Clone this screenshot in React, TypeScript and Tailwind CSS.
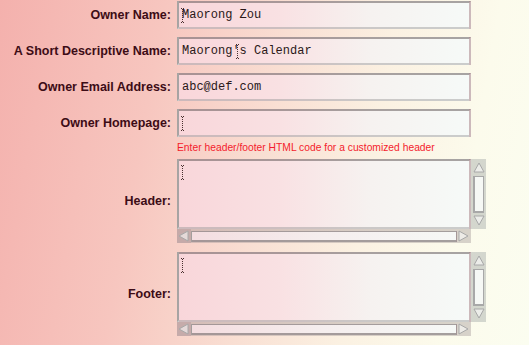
import React from "react";

const labelCls =
  "w-[171px] shrink-0 text-right font-bold text-[12.5px] leading-none text-[#3d0c16] [font-family:'Liberation_Sans',Arial,sans-serif]";

const boxCls =
  "relative w-[294px] border-2 border-t-[rgba(90,80,80,0.5)] border-l-[rgba(90,80,80,0.5)] border-b-[rgba(150,150,150,0.45)] border-r-[rgba(150,150,150,0.45)] bg-[linear-gradient(90deg,#f9d6da_0%,#f9e1e3_35%,#f6f2f0_66%,#f6faf8_100%)]";

function Caret({ left, top }: { left: number; top: number }) {
  return (
    <svg
      width="3"
      height="15"
      viewBox="0 0 3 15"
      className="absolute"
      style={{ left, top }}
    >
      <rect x="0" y="0" width="1" height="1" fill="#4a3030" />
      <rect x="2" y="0" width="1" height="1" fill="#4a3030" />
      {[1, 3, 5, 7, 9, 11, 13].map((y) => (
        <rect key={y} x="1" y={y} width="1" height="1" fill="#4a3030" />
      ))}
      <rect x="0" y="14" width="1" height="1" fill="#4a3030" />
      <rect x="2" y="14" width="1" height="1" fill="#4a3030" />
    </svg>
  );
}

function Field({ value, caret }: { value?: string; caret?: number }) {
  return (
    <div
      className={`${boxCls} h-[28px] flex items-center pl-[3px] text-[12px] text-[#2a1818] [font-family:'Liberation_Mono','Courier_New',monospace] whitespace-pre`}
    >
      {value}
      {caret !== undefined && <Caret left={caret} top={5} />}
    </div>
  );
}

function Arrow({ dir }: { dir: "up" | "down" | "left" | "right" }) {
  const pts: Record<string, string> = {
    up: "6,1 11,10 1,10",
    down: "1,1 11,1 6,10",
    left: "1,6 10,1 10,11",
    right: "1,1 10,6 1,11",
  };
  return (
    <svg width="12" height="12" viewBox="0 0 12 12">
      <polygon
        points={pts[dir]}
        fill="rgba(255,255,255,0.55)"
        stroke="#a8a8a8"
        strokeWidth="1"
      />
    </svg>
  );
}

function TextBlock() {
  return (
    <div className="flex flex-col">
      <div className="flex">
        <div className={`${boxCls} h-[70px]`}>
          <Caret left={2} top={4} />
        </div>
        <div className="w-[15px] h-[70px] flex flex-col items-center bg-[rgba(185,190,185,0.6)]">
          <div className="h-[17px] flex items-center justify-center">
            <Arrow dir="up" />
          </div>
          <div className="flex-1 w-[11px] bg-[#f6f8f5] border border-[#a8a8a8] border-b-2 border-l-2" />
          <div className="h-[16px] flex items-center justify-center">
            <Arrow dir="down" />
          </div>
        </div>
      </div>
      <div className="w-[294px] h-[14px] flex items-center bg-[rgba(170,160,160,0.45)]">
        <div className="w-[14px] h-[14px] flex items-center justify-center bg-[rgba(150,120,130,0.25)]">
          <Arrow dir="left" />
        </div>
        <div className="flex-1 h-[11px] border border-[rgba(130,120,120,0.7)] border-b-2 bg-[linear-gradient(90deg,#f4dde0_0%,#f5eeee_50%,#f6f8f6_100%)]" />
        <div className="w-[14px] h-[14px] flex items-center justify-center">
          <Arrow dir="right" />
        </div>
      </div>
    </div>
  );
}

export default function App() {
  return (
    <div className="w-[529px] h-[345px] overflow-hidden bg-[linear-gradient(100deg,#f4b1ad_0%,#f7c6bf_28%,#f9dfd3_50%,#fbf1e2_68%,#fcfbec_85%,#fbfdf0_100%)]">
      <div className="flex flex-col pt-[1px]">
        <div className="flex items-center gap-[6px] h-[28px]">
          <div className={labelCls}>Owner Name:</div>
          <Field value="Maorong Zou" caret={2} />
        </div>
        <div className="flex items-center gap-[6px] h-[28px] mt-[8px]">
          <div className={labelCls}>A Short Descriptive Name:</div>
          <Field value="Maorong's Calendar" caret={57} />
        </div>
        <div className="flex items-center gap-[6px] h-[28px] mt-[8px]">
          <div className={labelCls}>Owner Email Address:</div>
          <Field value="abc@def.com" />
        </div>
        <div className="flex items-center gap-[6px] h-[28px] mt-[8px]">
          <div className={labelCls}>Owner Homepage:</div>
          <Field caret={2} />
        </div>
        <div className="flex items-center gap-[6px] h-[22px]">
          <div className="w-[171px] shrink-0" />
          <div className="text-[10.3px] leading-none text-[#f41c2c] [font-family:'Liberation_Sans',Arial,sans-serif] whitespace-nowrap">
            Enter header/footer HTML code for a customized header
          </div>
        </div>
        <div className="flex items-center gap-[6px]">
          <div className={labelCls}>Header:</div>
          <TextBlock />
        </div>
        <div className="flex items-center gap-[6px] mt-[9px]">
          <div className={labelCls}>Footer:</div>
          <TextBlock />
        </div>
      </div>
    </div>
  );
}
